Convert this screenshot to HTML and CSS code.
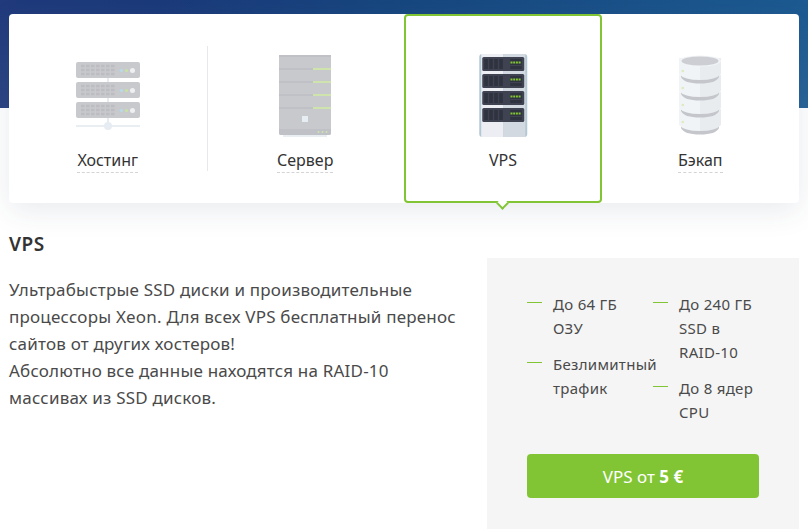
FILE: index.html
```html
<!DOCTYPE html>
<html lang="ru">
<head>
  <meta charset="UTF-8">
  <title>VPS</title>
  <link rel="stylesheet" href="styles.css">
</head>
<body>

  <svg class="defs" width="0" height="0">
    <defs>
      <!-- юнит хостинга -->
      <g id="host-unit">
        <rect x="8" y="0" width="64" height="16" rx="2" fill="#c8c9cc"/>
        <g stroke="#bcbdc1" stroke-width="2.4" stroke-dasharray="3.6 1.4">
          <line x1="13" y1="4" x2="47" y2="4"/>
          <line x1="13" y1="8" x2="47" y2="8"/>
          <line x1="13" y1="12" x2="47" y2="12"/>
        </g>
        <circle cx="53.5" cy="8.5" r="1.6" fill="#b5dbe8"/>
        <circle cx="58.5" cy="8.5" r="1.6" fill="#c9e2a3"/>
        <circle cx="64.5" cy="8.5" r="2.5" fill="#eef0f2"/>
      </g>
      <!-- юнит стойки -->
      <g id="vps-unit">
        <rect x="19.25" y="0" width="42" height="14" rx="1.5" fill="#3f4250"/>
        <g fill="#2f3340">
          <rect x="21.25" y="2" width="3.6" height="10"/>
          <rect x="26.25" y="2" width="3.6" height="10"/>
          <rect x="31.25" y="2" width="3.6" height="10"/>
          <rect x="36.25" y="2" width="3.6" height="10"/>
          <rect x="47.25" y="2" width="11.5" height="10"/>
        </g>
        <g fill="#82c534">
          <rect x="47.5" y="4.5" width="2" height="2"/>
          <rect x="50.2" y="4.5" width="2" height="2"/>
          <rect x="52.9" y="4.5" width="2" height="2"/>
          <rect x="55.6" y="4.5" width="2" height="2"/>
        </g>
        <rect x="47.25" y="8" width="11.5" height="1" fill="#3f4250"/>
      </g>
      <!-- секция диска -->
      <g id="disk-unit">
        <path d="M21 12H59V16Q56 22.500 40 22.500Q24 22.500 21 16Z" fill="#c4c6cb"/>
        <path d="M19-3H40V19Q24 19 19 13Z" fill="#f1f4f6"/>
        <path d="M40-3H61V13Q56 19 40 19Z" fill="#e8ecef"/>
        <circle cx="22.750" cy="10" r="1.300" fill="#dcebc0"/>
      </g>
    </defs>
  </svg>

  <div class="hero"></div>

  <div class="tabs">
    <div class="tab tab-line">
      <svg class="tab-icon" viewBox="0 0 80 90">
        <rect x="39" y="20" width="2" height="56" fill="#e6ecf1"/>
        <rect x="8" y="75" width="64" height="2" fill="#e9eef3"/>
        <circle cx="40" cy="76" r="4" fill="#e6ecf2"/>
        <use href="#host-unit" y="12"/>
        <use href="#host-unit" y="32"/>
        <use href="#host-unit" y="52"/>
      </svg>
      <span class="tab-label">Хостинг</span>
    </div>
    <div class="tab">
      <svg class="tab-icon" viewBox="0 0 80 90">
        <rect x="18" y="84" width="44" height="3" fill="#e9eef3"/>
        <rect x="14" y="5" width="52" height="80" rx="2" fill="#c8c9cd"/>
        <rect x="14" y="5" width="52" height="2" fill="#c0c1c6"/>
        <g fill="#c0c1c6">
          <rect x="14" y="18" width="52" height="2"/>
          <rect x="14" y="31" width="52" height="2"/>
          <rect x="14" y="44" width="52" height="2"/>
          <rect x="14" y="57" width="52" height="2"/>
        </g>
        <g fill="#cfe3ad">
          <rect x="48" y="18" width="18" height="2"/>
          <rect x="48" y="31" width="18" height="2"/>
          <rect x="48" y="44" width="18" height="2"/>
          <rect x="48" y="57" width="18" height="2"/>
        </g>
        <rect x="37" y="66" width="6" height="6" fill="#e6eef3"/>
        <path d="M14 79h52v4a2 2 0 0 1-2 2H16a2 2 0 0 1-2-2z" fill="#c0c1c6"/>
        <circle cx="53.5" cy="82" r="1" fill="#cfe3ad"/>
        <circle cx="57.5" cy="82" r="1" fill="#cfe3ad"/>
        <circle cx="61.5" cy="82" r="1" fill="#cfe3ad"/>
      </svg>
      <span class="tab-label">Сервер</span>
    </div>
    <div class="tab tab-active">
      <svg class="tab-icon" viewBox="0 0 80 90">
        <rect x="16.25" y="4" width="48" height="83" rx="3" fill="#b4c8d4"/>
        <rect x="18.25" y="4" width="22" height="83" fill="#eceef3"/>
        <rect x="40.25" y="4" width="22" height="83" fill="#d3d9e1"/>
        <use href="#vps-unit" y="7"/>
        <use href="#vps-unit" y="24"/>
        <use href="#vps-unit" y="41"/>
        <use href="#vps-unit" y="58"/>
      </svg>
      <span class="tab-label">VPS</span>
    </div>
    <div class="tab">
      <svg class="tab-icon" viewBox="0 0 80 90">
        <use href="#disk-unit" y="62"/>
        <use href="#disk-unit" y="45"/>
        <use href="#disk-unit" y="28"/>
        <use href="#disk-unit" y="11"/>
        <ellipse cx="40" cy="11" rx="21" ry="5.500" fill="#f1f4f6"/>
        <ellipse cx="40" cy="11" rx="18.500" ry="4.500" fill="#cdced3"/>
      </svg>
      <span class="tab-label">Бэкап</span>
    </div>
  </div>

  <div class="content">
    <div class="text">
      <h2 class="title">VPS</h2>
      <p class="desc">Ультрабыстрые SSD диски и производительные процессоры Xeon. Для всех VPS бесплатный перенос сайтов от других хостеров!<br>Абсолютно все данные находятся на RAID-10 массивах из SSD дисков.</p>
    </div>
    <div class="panel">
      <div class="features">
        <ul class="feature-col">
          <li>До 64 ГБ ОЗУ</li>
          <li>Безлимитный трафик</li>
        </ul>
        <ul class="feature-col">
          <li>До 240 ГБ SSD в RAID-10</li>
          <li>До 8 ядер CPU</li>
        </ul>
      </div>
      <a class="buy-btn">VPS от <b>5 €</b></a>
    </div>
  </div>

</body>
</html>
```

FILE: styles.css
```css
html, body {
  margin: 0;
  padding: 0;
  background: #fff;
}
body {
  font-family: 'Noto Sans', sans-serif;
  color: #4a4a4a;
  height: 529px;
  overflow: hidden;
}
.defs {
  display: block;
  height: 0;
}

/* Синяя полоса */
.hero {
  height: 108px;
  background:
    linear-gradient(180deg, rgba(255,255,255,0), rgba(255,255,255,0.06)),
    linear-gradient(90deg, #203a7c 0%, #1b3a7a 20%, #17477f 50%, #1c5a91 100%);
}

/* Вкладки */
.tabs {
  display: grid;
  grid-template-columns: repeat(4, 1fr);
  margin: -94px 9px 0;
  height: 189px;
  background: #fff;
  border-radius: 4px;
  box-shadow: 0 8px 30px rgba(40,60,90,0.1);
}
.tab {
  position: relative;
  box-sizing: border-box;
  display: flex;
  flex-direction: column;
  align-items: center;
  padding-top: 36px;
}
.tab-icon {
  display: block;
  width: 80px;
  height: 90px;
}
.tab-label {
  margin-top: 8px;
  font-size: 16px;
  line-height: 24px;
  color: #333;
  border-bottom: 1px dashed #d4d4d4;
}
.tab-line::after {
  content: '';
  position: absolute;
  top: 32px;
  right: -1px;
  width: 1px;
  height: 125px;
  background: #e6e8ea;
}
.tab-active {
  padding-top: 34px;
  border: 2px solid #82c534;
  border-radius: 4px;
  margin-right: -0.5px;
}
.tab-active .tab-label {
  border-bottom-color: transparent;
}
/* Стрелка под активной вкладкой */
.tab-active::before {
  content: '';
  position: absolute;
  left: 50%;
  bottom: -7px;
  width: 9px;
  height: 9px;
  margin-left: -5px;
  background: #fff;
  border-right: 2px solid #82c534;
  border-bottom: 2px solid #82c534;
  transform: rotate(45deg);
  box-sizing: border-box;
}

/* Описание и блок с характеристиками */
.content {
  display: flex;
  justify-content: space-between;
  margin: 0 9px;
}
.text {
  width: 450px;
}
.title {
  margin: 29px 0 0;
  font-size: 19px;
  line-height: 24px;
  font-weight: 600;
  letter-spacing: 0.5px;
  color: #333;
}
.desc {
  margin: 20px 0 0;
  font-size: 17px;
  line-height: 27px;
  letter-spacing: 0.2px;
}
.panel {
  box-sizing: border-box;
  width: 312px;
  height: 271px;
  margin-top: 55px;
  padding: 34px 40px 0;
  background: #f5f5f5;
}
.features {
  display: flex;
  height: 162px;
}
.feature-col {
  width: 126px;
  margin: 0;
  padding: 0;
  list-style: none;
}
.feature-col li {
  position: relative;
  padding: 0 4px 0 26px;
  margin-bottom: 12px;
  font-size: 15px;
  letter-spacing: 0.3px;
  line-height: 24px;
}
.feature-col li::before {
  content: '';
  position: absolute;
  top: 10px;
  left: 0;
  width: 15px;
  height: 1px;
  background: #82c534;
}
.buy-btn {
  display: block;
  height: 44px;
  line-height: 46px;
  text-align: center;
  font-size: 17px;
  color: #fff;
  background: #82c534;
  border-radius: 4px;
}
```
